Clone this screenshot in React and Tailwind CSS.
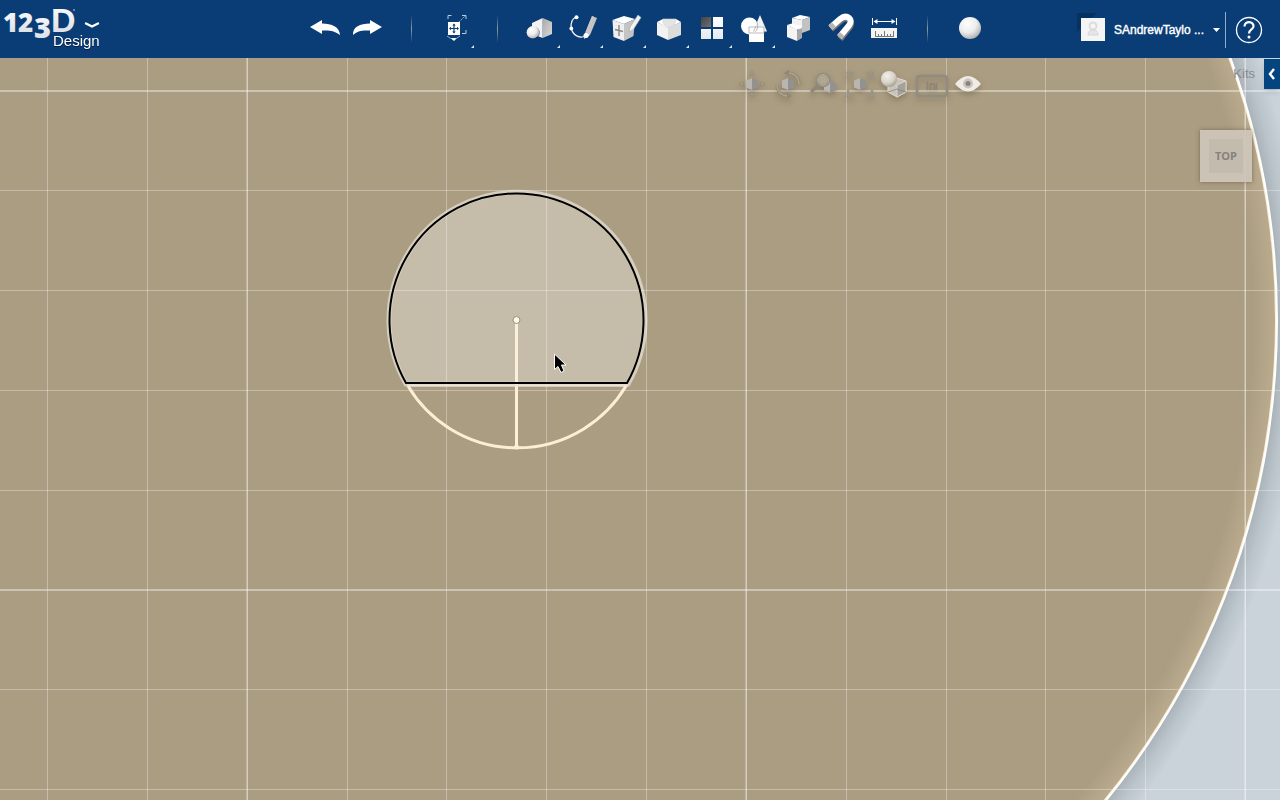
import { useState } from 'react'

const SANS = "font-['Liberation_Sans',Arial,sans-serif]"

const GRID_X = [47, 147, 247, 347, 446, 546, 646, 746, 846, 946, 1045, 1145, 1245]
const GRID_Y = [33, 132, 232, 332, 432, 532, 631, 731]
const MAJOR_X = [247, 746, 1245]
const MAJOR_Y = [33, 532]

const TOOLS = [
  { id: 'undo', label: 'Undo' },
  { id: 'redo', label: 'Redo' },
  { id: 'sep1' },
  { id: 'transform', label: 'Transform', menu: true },
  { id: 'sep2' },
  { id: 'primitives', label: 'Primitives', menu: true },
  { id: 'sketch', label: 'Sketch', menu: true },
  { id: 'construct', label: 'Construct', menu: true },
  { id: 'modify', label: 'Modify', menu: true },
  { id: 'pattern', label: 'Pattern', menu: true },
  { id: 'grouping', label: 'Grouping', menu: true },
  { id: 'combine', label: 'Combine' },
  { id: 'snap', label: 'Snap' },
  { id: 'measure', label: 'Measure' },
  { id: 'sep3' },
  { id: 'material', label: 'Material' },
]

const ICONS = {
  undo: <path d="M6 27 18 20V23.500C28 23.500 35.500 27 36 35C31 31 26 30 18 30.500V34Z" fill="#fff" />,
  redo: <path d="M35 27 23 20V23.500C13 23.500 5.500 27 6 35C10 31 15 30 23 30.500V34Z" fill="#fff" />,
  transform: (
    <>
      <path d="M15 19V15.500H18.500M29 15.500H33V19M33 30V33.500H29" fill="none" stroke="#b9cde2" />
      <path d="M26 22 32 16" stroke="#8fb0cc" strokeDasharray="2 1" />
      <path d="M15 22H27V35H15Z" fill="#fff" />
      <path d="M21 24.500V32.500M17 28.500H25" stroke="#0b3c74" strokeWidth="1.200" />
      <path d="M19.300 25.500 21 23.500 22.700 25.500ZM19.300 31.500 21 33.500 22.700 31.500ZM18 26.800 16 28.500 18 30.200ZM24 26.800 26 28.500 24 30.200Z" fill="#0b3c74" />
      <path d="M14 36Q20.500 42 27 36" fill="none" stroke="#8fb0cc" />
      <path d="M18 38.500 21 38 23.500 38.500 21 41Z" fill="#fff" />
    </>
  ),
  primitives: (
    <>
      <path d="M13 23 23.700 18V38L13 34Z" fill="#f2f2f2" />
      <path d="M23.700 18 33 22V34L23.700 38Z" fill="url(#grey)" />
      <circle cx="14.500" cy="33" r="6.300" fill="#05264d" opacity=".5" />
      <circle cx="13.800" cy="32.300" r="6.200" fill="url(#ball)" />
    </>
  ),
  sketch: (
    <>
      <path d="M14.500 17C9 19 8.500 24 9.500 29C11 35 17 39 24 36" fill="none" stroke="#e8eef5" strokeWidth="1.300" />
      <path d="M30 16 35 18 28 35 23.500 32Z" fill="url(#grey)" />
      <path d="M30 16 32 17 25.500 33 23.500 32Z" fill="#c9c9c9" />
      <path d="M23.500 32 28 35 22 39Z" fill="#f4f4f4" />
      <circle cx="14.500" cy="17.300" r="2" fill="#fff" />
      <circle cx="9.300" cy="28.500" r="1.900" fill="#fff" />
      <circle cx="24" cy="35.500" r="2.500" fill="#fff" />
    </>
  ),
  construct: (
    <>
      <path d="M7.500 20 19 16 30 19 19 24Z" fill="#fff" />
      <path d="M7.500 20 19 24V41L8.500 37Z" fill="#efefef" />
      <path d="M19 24 30 19 28.500 36 19 41Z" fill="#c4c4c4" />
      <path d="M14 25V36M10 29.500 18 31.500" stroke="#888" strokeWidth="1.400" />
      <path d="M33 15 36 17.500 28 30 24 32 25 27Z" fill="#f4f4f4" stroke="#aaa" strokeWidth=".7" />
    </>
  ),
  modify: (
    <>
      <path d="M9 22 15 19H28L33 22 20 28Z" fill="#fff" />
      <path d="M9 22 20 27.500V40L9 35Z" fill="#f2f2f2" />
      <path d="M33 22 20 27.500V40L33 35Z" fill="#dcdcdc" />
      <path d="M15 19H28C28 24 25 27 20 27.500C16.500 26 14.500 23 15 19Z" fill="#e4e4e4" stroke="#d0d0d0" strokeWidth=".6" />
    </>
  ),
  pattern: (
    <>
      <path d="M10 17H20V27H10Z" fill="url(#dark)" />
      <path d="M22 17H32V27H22ZM10 29H20V39H10ZM22 29H32V39H22Z" fill="url(#plate)" />
    </>
  ),
  grouping: (
    <>
      <circle cx="15.500" cy="26" r="8.500" fill="#fff" />
      <path d="M26 15 33 31.500H19Z" fill="#f3f3f3" />
      <path d="M15 27H30V42H15Z" fill="#fff" />
      <path d="M15 33V27H30V33H15M23 22Q25 29 21 32M22 26 19.500 31.500" fill="none" stroke="#aaa" strokeWidth=".8" />
    </>
  ),
  combine: (
    <>
      <path d="M15 18 23 15 33 17 25 20Z" fill="#fff" />
      <path d="M15 18 25 20V31L15 27Z" fill="#f2f2f2" />
      <path d="M25 20 33 17V30L25 33Z" fill="#c2c2c2" />
      <path d="M10 25 15 23.500 25 26 20 30Z" fill="#fff" />
      <path d="M10 25 20 29.500V41L10 37Z" fill="#f4f4f4" />
      <path d="M20 30.500 25 28V38L20 41Z" fill="#a8a8a8" />
    </>
  ),
  snap: (
    <>
      <path d="M11 29 20.500 20.500C27 15 34 21 29.500 27L20 39" fill="none" stroke="#777" strokeWidth="6.500" />
      <path d="M10.500 27.500 20 19C27 13.500 34 19.500 29 25.500L19.500 37" fill="none" stroke="#fff" strokeWidth="6" />
      <path d="M10.500 27.500 13.800 24.500M19.500 37 22 34" stroke="#b5b5b5" strokeWidth="6" />
    </>
  ),
  measure: (
    <>
      <path d="M9.500 18V25M33.500 18V25M11 21.500H32" stroke="#fff" />
      <path d="M10.500 21.500 14.500 19V24ZM32.500 21.500 28.500 19V24Z" fill="#fff" />
      <path d="M8 28H34V38H8Z" fill="#f4f4f4" />
      <path d="M12.500 31V37M15.500 34V37M18.500 34V37M21.500 31V37M24.500 34V37M27.500 34V37M30.500 31V37M12 36.500H31" stroke="#777" />
    </>
  ),
  material: <circle cx="21" cy="28" r="11" fill="url(#ball)" />,
}

const Hex = ({ x = 18, y = 14 }) => (
  <g transform={`translate(${x} ${y})`}>
    <path d="M-6-3.500 0-6V6L-6 3.500Z" fill="#b9b6af" />
    <path d="M0-6 6-3.500V3.500L0 6Z" fill="#939290" />
  </g>
)

const NAV = [
  {
    label: 'Pan',
    icon: (
      <>
        <Hex />
        <path d="M18 1 20 5H16ZM18 27 20 23H16ZM5 14 9 12V16ZM31 14 27 12V16Z" fill="#b0a48e" stroke="#8f8777" strokeWidth=".8" />
      </>
    ),
  },
  {
    label: 'Orbit',
    icon: (
      <>
        <Hex />
        <path d="M18 3C25 3 29 8 29 14M18 26C11 26 7 21 7 15" fill="none" stroke="#8f8777" strokeWidth="3" />
        <path d="M18 3C25 3 29 8 29 14M18 26C11 26 7 21 7 15" fill="none" stroke="#b0a48e" strokeWidth="1.300" />
        <path d="M14 3 19 0V6ZM22 26 17 23V29Z" fill="#8f8777" />
      </>
    ),
  },
  {
    label: 'Zoom',
    icon: (
      <>
        <Hex x={24} y={17} />
        <path d="M13 15 5 22" stroke="#8f8777" strokeWidth="3" />
        <circle cx="17" cy="10" r="6" fill="#b2a68d" stroke="#8f8b83" strokeWidth="2.500" />
        <circle cx="17" cy="10" r="5.500" fill="none" stroke="#bbb6aa" strokeWidth=".8" />
      </>
    ),
  },
  {
    label: 'Fit',
    icon: (
      <>
        <Hex />
        <path d="M6 9V3H12M24 3H30V9M30 20V26H24M12 26H6V20" fill="none" stroke="#8f8b83" strokeWidth="2.500" />
        <path d="M6 9V3H12M24 3H30V9M30 20V26H24M12 26H6V20" fill="none" stroke="#ada18b" strokeWidth=".8" />
      </>
    ),
  },
  {
    label: 'Materials and outlines',
    icon: (
      <>
        <path d="M10 12 19 8 28 11V22L19 27 10 22Z" fill="#c9c4ba" stroke="#e1ddd5" />
        <path d="M19 15 28 11V22L19 27Z" fill="#a5a29b" stroke="#dedad2" strokeWidth=".8" />
        <path d="M10 22 19 19 28 22" fill="none" stroke="#827d73" strokeWidth=".7" />
        <circle cx="11" cy="9" r="8" fill="url(#navball)" />
      </>
    ),
  },
  {
    label: 'Units',
    icon: (
      <>
        <path d="M6 6H30Q33 6 33 9V23Q33 26 30 26H6Q3 26 3 23V9Q3 6 6 6Z" fill="none" stroke="#918b80" strokeWidth="2.500" />
        <path d="M13.500 11V20M16.500 13V20M16.500 15Q19 12 20.500 15V20M22.500 13V20" fill="none" stroke="#8a8479" strokeWidth="1.500" />
      </>
    ),
  },
  {
    label: 'Visibility',
    icon: (
      <>
        <path d="M5 14Q18-2 31 14Q18 29 5 14Z" fill="#f0ece5" />
        <circle cx="18" cy="13.500" r="5" fill="#c9c5be" />
        <circle cx="18" cy="13.500" r="2.500" fill="#88837b" />
      </>
    ),
  },
]

function Defs() {
  return (
    <svg className="absolute size-0" aria-hidden="true">
      <defs>
        <radialGradient id="ball" cx=".38" cy=".3" r=".75">
          <stop offset="0" stopColor="#fff" />
          <stop offset=".55" stopColor="#ececec" />
          <stop offset="1" stopColor="#aaa" />
        </radialGradient>
        <radialGradient id="navball" cx=".38" cy=".3" r=".75">
          <stop offset="0" stopColor="#f2eee8" />
          <stop offset=".6" stopColor="#d8d3ca" />
          <stop offset="1" stopColor="#a19a8d" />
        </radialGradient>
        <linearGradient id="grey" x1="0" y1="0" x2="1" y2="1">
          <stop offset="0" stopColor="#aaa" />
          <stop offset="1" stopColor="#dadada" />
        </linearGradient>
        <linearGradient id="dark" x1="0" y1="0" x2="1" y2="1">
          <stop offset="0" stopColor="#444" />
          <stop offset="1" stopColor="#707070" />
        </linearGradient>
        <linearGradient id="plate" x1="0" y1="0" x2="0" y2="1">
          <stop offset="0" stopColor="#fff" />
          <stop offset="1" stopColor="#e6eaee" />
        </linearGradient>
        <linearGradient id="logo" x1="0" y1="0" x2="0" y2="1">
          <stop offset="0" stopColor="#fff" />
          <stop offset="1" stopColor="#d5dbe2" />
        </linearGradient>
      </defs>
    </svg>
  )
}

function Logo() {
  return (
    <button className="flex items-start" aria-label="Application menu">
      <svg width="110" height="58" viewBox="0 0 110 58">
        <g fill="url(#logo)" fontFamily="'Open Sans', 'Noto Sans', sans-serif" fontWeight="800">
          <text x="3" y="32" fontSize="26">1</text>
          <text x="18" y="32" fontSize="26">2</text>
          <text x="34" y="38" fontSize="29">3</text>
        </g>
        <text x="51" y="32" fill="url(#logo)" fontFamily="'Liberation Sans', Arial, sans-serif" fontWeight="700" fontSize="34">D</text>
        <circle cx="74" cy="10" r="1" fill="#7f9dc0" />
        <path d="M86 23.500 92 26.500 98 23.500" fill="none" stroke="#fff" strokeWidth="2.400" strokeLinecap="round" strokeLinejoin="round" />
        <text
          x="53" y="46" fill="#fff" fontSize="15" fontFamily="'Liberation Sans', Arial, sans-serif"
          className="drop-shadow-[0_1px_0_#031a38]"
        >
          Design
        </text>
      </svg>
    </button>
  )
}

function Tool({ tool }) {
  if (!tool.label) {
    return (
      <div className="flex w-[43px] items-center justify-center">
        <div className="h-7 w-px bg-linear-to-b from-transparent via-[#8f9aa5] to-transparent" />
      </div>
    )
  }
  return (
    <button className="relative h-full w-[43px] hover:bg-white/10" aria-label={tool.label}>
      <svg width="43" height="58" viewBox="0 0 43 58">
        {ICONS[tool.id]}
        {tool.menu && <path d="M41 45V48H38Z" fill="#dfe6ee" />}
      </svg>
    </button>
  )
}

function Header() {
  return (
    <header className="flex h-[58px] shrink-0 bg-[#0a3c75]">
      <div className="flex flex-1">
        <Logo />
      </div>
      <div className="ml-4 flex" role="toolbar" aria-label="Tools">
        {TOOLS.map(t => <Tool key={t.id} tool={t} />)}
      </div>
      <div className="flex-1">
        <div className="flex h-full items-center justify-end pt-[2px] pr-[17px]">
          <button className="flex items-center gap-[9px] pr-[5px] text-white">
            <svg width="28" height="34" viewBox="0 0 28 34" aria-hidden="true">
              <path d="M0 0H20L14 5H4V15L0 19Z" fill="#063160" />
              <path d="M4 5H28V28H4Z" fill="#f5f5f5" />
              <circle cx="16" cy="13" r="3.500" fill="none" stroke="#dcdcdc" strokeWidth="2" />
              <path d="M11 22Q11 17 16 17Q21 17 21 22Z" fill="#e6e6e6" stroke="#d8d8d8" />
            </svg>
            <span className="text-[12px] [-webkit-text-stroke:0.400px_white]">SAndrewTaylo ...</span>
            <svg width="7" height="4" viewBox="0 0 7 4" aria-hidden="true"><path d="M0 0H7L3.500 4Z" fill="#fff" /></svg>
          </button>
          <div className="h-9 w-px bg-[#8db0cf]" />
          <button className="ml-[9px]" aria-label="Help">
            <svg width="28" height="28" viewBox="0 0 28 28">
              <circle cx="14" cy="14" r="12.500" fill="none" stroke="#fff" strokeWidth="1.300" />
              <path d="M9.500 10.500C9.500 4.500 19 5 18.500 10.500C18.300 13.500 14 13.500 14 17.500" fill="none" stroke="#fff" strokeWidth="2.200" />
              <circle cx="14" cy="21" r="1.500" fill="#fff" />
            </svg>
          </button>
        </div>
      </div>
    </header>
  )
}

function Drawing() {
  return (
    <svg className="block size-full" aria-label="Sketch canvas">
      <defs>
        <radialGradient id="floor" gradientUnits="userSpaceOnUse" cx="517" cy="262" r="800">
          <stop offset=".95" stopColor="#a9b2b7" />
          <stop offset=".965" stopColor="#bac4cb" />
          <stop offset=".985" stopColor="#cad2da" />
        </radialGradient>
        <radialGradient id="disc" gradientUnits="userSpaceOnUse" cx="517" cy="262" r="760">
          <stop offset=".968" stopColor="#ab9d81" />
          <stop offset="1" stopColor="#bbac90" />
        </radialGradient>
      </defs>
      <rect width="100%" height="100%" fill="url(#floor)" />
      <circle cx="517" cy="262" r="760" fill="url(#disc)" />
      <path d="M406 326A128 128 0 1 1 628 326Z" fill="#c5bda9" stroke="#d6cfc0" strokeWidth="5" />
      <g fill="#fff" shapeRendering="crispEdges">
        {GRID_X.map(x => (
          <rect key={x} x={x} y="0" width="1" height="100%" opacity={MAJOR_X.includes(x) ? 0.5 : 0.32} />
        ))}
        {GRID_Y.map(y => (
          <rect key={y} x="0" y={y} width="100%" height="1" opacity={MAJOR_Y.includes(y) ? 0.4 : 0.32} />
        ))}
        {MAJOR_X.map(x => <rect key={x} x={x - 1} y="0" width="1" height="100%" opacity=".25" />)}
        {MAJOR_Y.map(y => <rect key={y} x="0" y={y - 1} width="100%" height="1" opacity=".4" />)}
      </g>
      <g fill="none">
        <circle cx="517" cy="262" r="759" stroke="#fbeed6" strokeWidth="2" />
        <circle cx="517" cy="262" r="760" stroke="#fff" strokeWidth="2" />
        <path d="M408 328A127 127 0 0 0 626 328" stroke="#fdeed3" strokeWidth="3" />
        <path d="M516.500 262V389" stroke="#fdf0d9" strokeWidth="3" />
        <path d="M406 325A127 127 0 1 1 627 325Z" stroke="#000" strokeWidth="2" />
        <path d="M407 327.500H628" stroke="#ece6da" strokeWidth="2" />
      </g>
      <circle cx="516.500" cy="262" r="3.500" fill="#fff8ea" stroke="#9b8f78" />
      <circle cx="516.500" cy="389" r="2.500" fill="#fdeed3" />
      <path d="M554.500 296V311.500L558 308.500L561 314.500L564 313L561.500 307H566Z" fill="#000" stroke="#fff" strokeWidth="1" />
    </svg>
  )
}

function NavBar() {
  return (
    <div className="absolute top-3 right-[294px] flex" role="toolbar" aria-label="Navigation">
      {NAV.map(n => (
        <button key={n.label} className="w-9 drop-shadow-[0_3px_3px_rgba(70,60,40,0.35)]" aria-label={n.label}>
          <svg width="36" height="30" viewBox="0 0 36 30">{n.icon}</svg>
        </button>
      ))}
    </div>
  )
}

export default function App() {
  const [kitsOpen, setKitsOpen] = useState(false)

  return (
    <div className={`flex h-screen flex-col overflow-hidden ${SANS}`}>
      <Defs />
      <Header />
      <main className="relative min-h-0 flex-1">
        <Drawing />
        <NavBar />
        <div className="absolute top-px right-0 flex items-center gap-[9px]">
          <span className="text-[13px] text-[#858988]">Kits</span>
          <button
            onClick={() => setKitsOpen(o => !o)}
            aria-label="Kits panel"
            aria-expanded={kitsOpen}
            className="flex h-[30px] w-4 items-center justify-center bg-[#04457f] shadow-md"
          >
            <svg width="8" height="12" viewBox="0 0 8 12"><path d="M6 1 2 6 6 11" fill="none" stroke="#fff" strokeWidth="2.400" /></svg>
          </button>
        </div>
        <button className="absolute top-[72px] right-7 flex size-[52px] items-center justify-center bg-[#cdc5b8]/95 shadow-[0_0_4px_rgba(80,70,50,0.6)]">
          <span className="flex size-[34px] items-center justify-center bg-[#c3bbad] font-['Open_Sans',sans-serif] text-[11px] font-bold text-[#85817b]">TOP</span>
        </button>
      </main>
    </div>
  )
}
